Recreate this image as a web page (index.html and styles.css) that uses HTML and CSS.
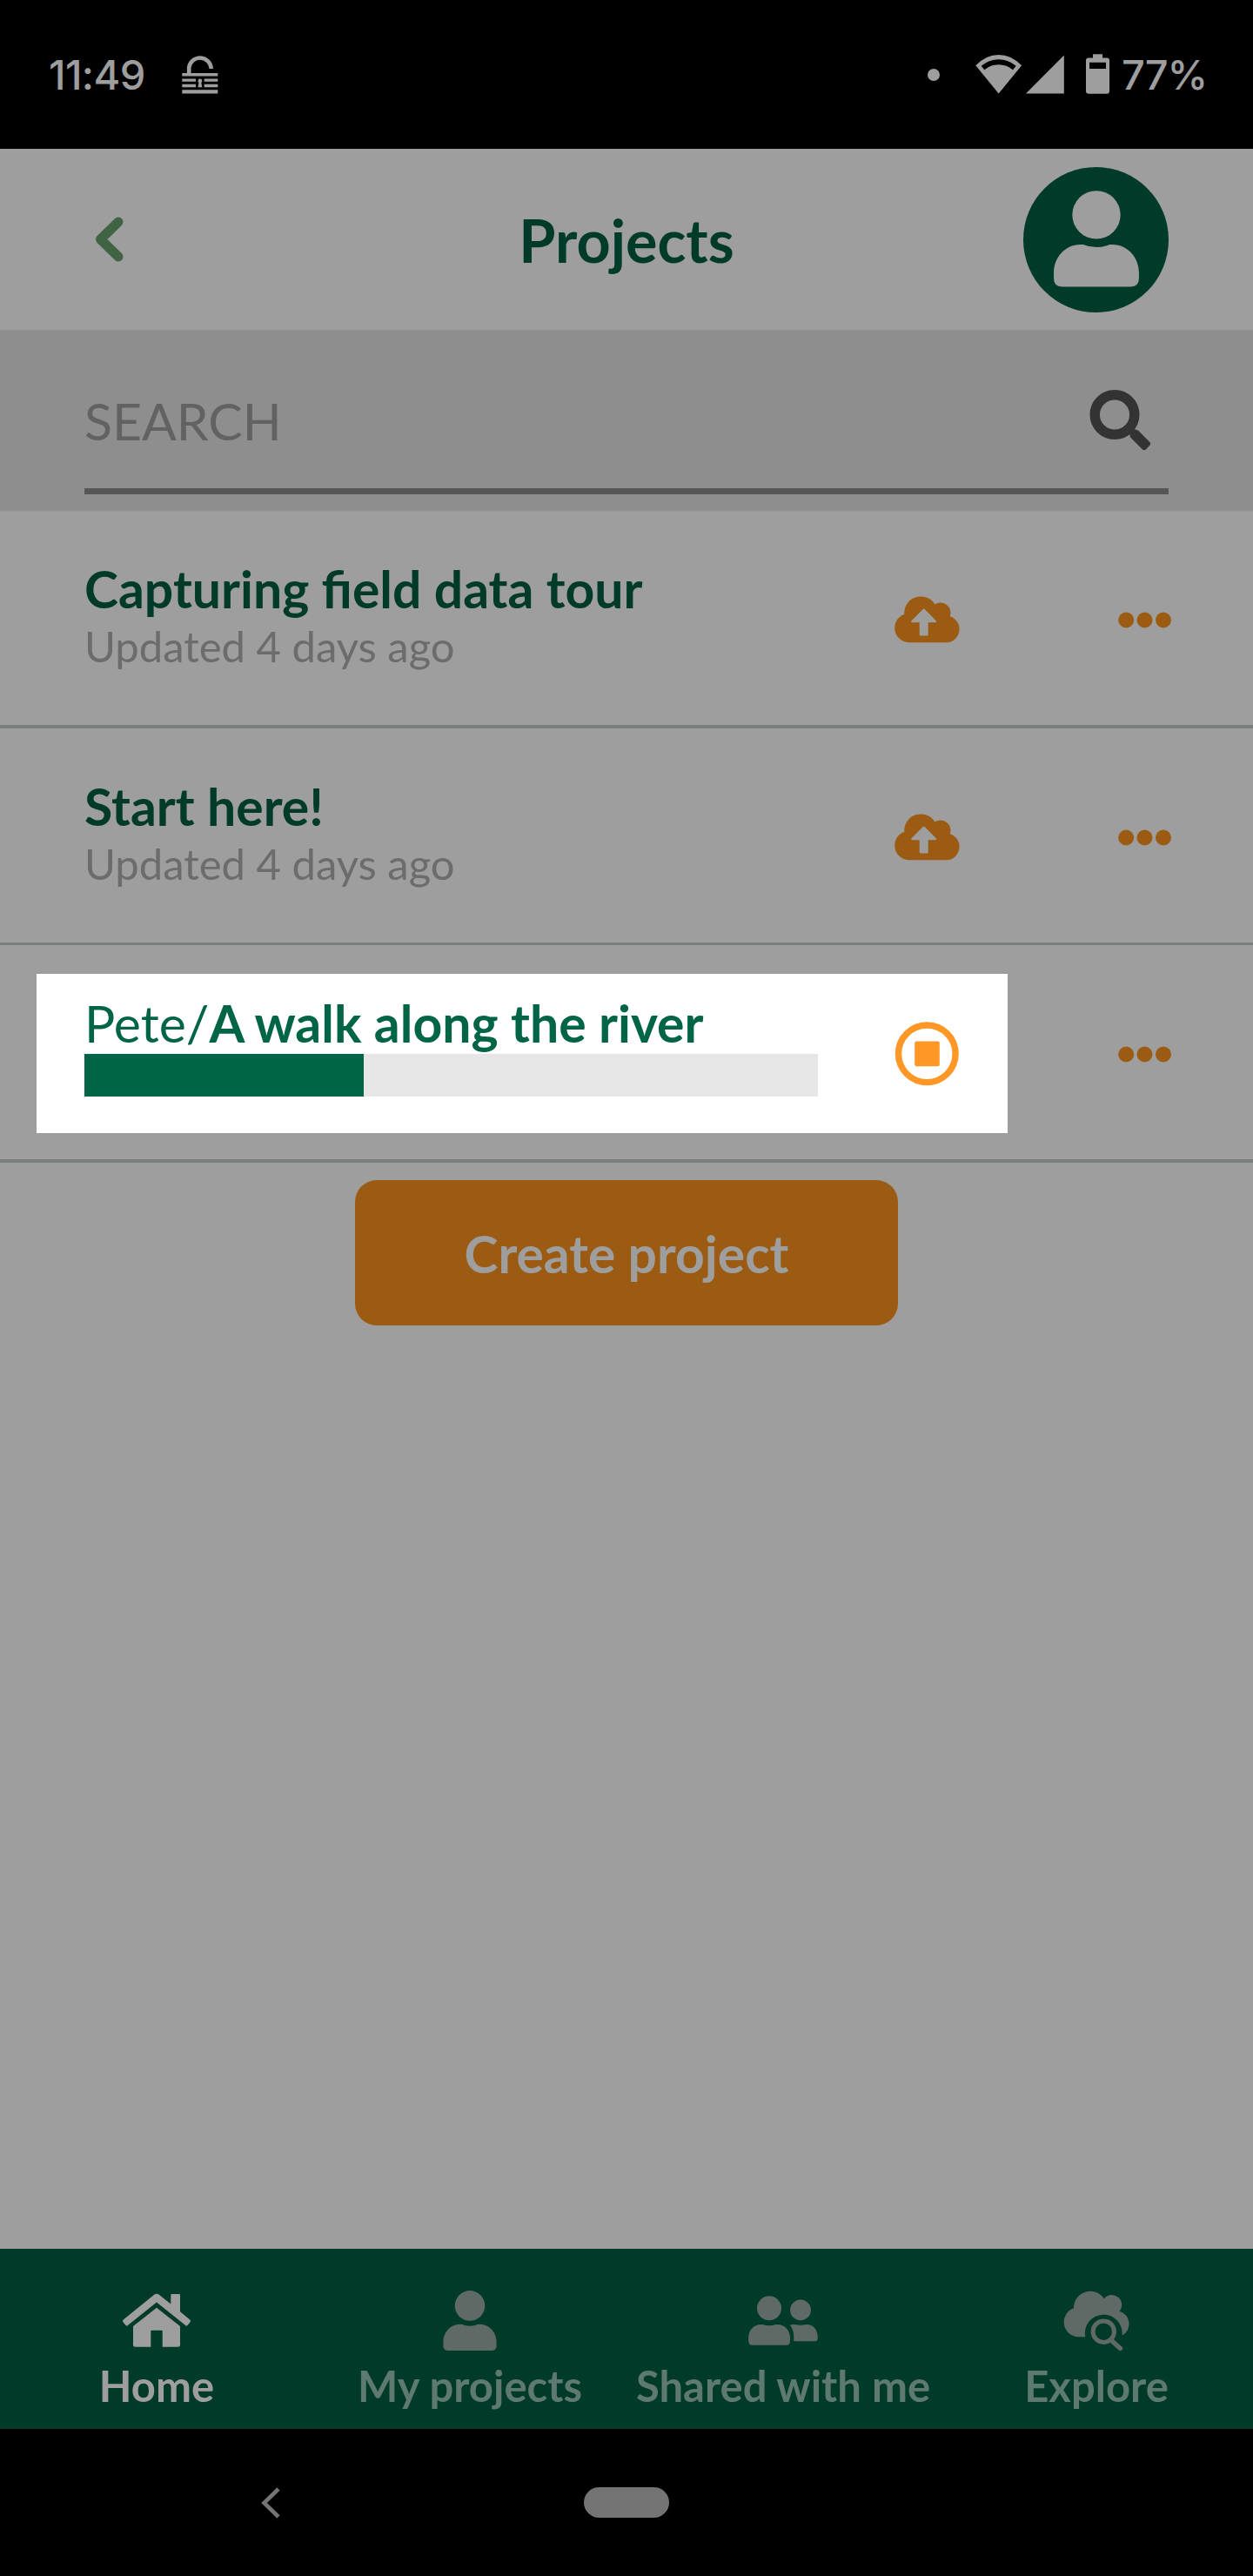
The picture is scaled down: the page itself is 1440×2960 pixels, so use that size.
FILE: index.html
```
<!DOCTYPE html>
<html lang="en">
<head>
<meta charset="utf-8">
<title>Projects</title>
<link rel="stylesheet" href="styles.css">
</head>
<body>
<svg class="defs" aria-hidden="true">
  <symbol id="person" viewBox="0 0 80 70">
    <circle cx="40" cy="17.4" r="17.3"/>
    <path d="M30.5 38.8Q40 42.6 49.5 38.8C62 37.6 70.6 48 70.6 59V63Q70.6 69 64.8 69H15.2Q9.4 69 9.4 63V59C9.4 48 18 37.6 30.5 38.8Z"/>
  </symbol>
  <symbol id="cloud-upload" viewBox="0 0 80 80">
    <path fill-rule="evenodd" d="M20 66.3A16.8 16.8 0 0 1 14.3 33.7A18.9 18.9 0 0 1 49.3 22.5A11.6 11.6 0 0 1 66.7 36.2A15.4 15.4 0 0 1 63 66.3ZM36 27.8L22.3 41.5Q21.8 43.3 23 43.3H31.7V57.3Q31.7 58.4 32.8 58.4H40.6Q41.7 58.4 41.7 57.3V43.3H50.2Q51.6 43.3 51 41.5L37.4 27.8Q36.7 27.2 36 27.8Z"/>
  </symbol>
  <symbol id="dots" viewBox="0 0 62 19">
    <circle cx="9.2" cy="9.5" r="9"/><circle cx="30.5" cy="9.5" r="9"/><circle cx="52" cy="9.5" r="9"/>
  </symbol>
</svg>

<div class="status">
  <span class="time">11:49</span>
  <svg class="lock" viewBox="0 0 42 47">
    <path d="M8.2 23V15.8A12.8 12.8 0 0 1 33.7 17" fill="none" stroke="currentColor" stroke-width="4.6"/>
    <path d="M.3 22H41.3V25.4H.3ZM.3 28.4H16V31.8H.3ZM25.7 28.4H41.3V31.8H25.7ZM.3 34.8H16V38.2H.3ZM25.7 34.8H41.3V38.2H25.7ZM.3 41.2H41.3V45.4H.3Z"/>
    <circle cx="20.9" cy="31" r="2.4"/><path d="M20 31H21.8L23.4 38.2H18.4Z"/>
  </svg>
  <div class="signals">
    <svg class="alert" viewBox="0 0 14 14"><circle cx="7" cy="7" r="7"/></svg>
    <svg class="wifi" viewBox="0 0 54 47"><path fill-rule="evenodd" d="M26.7 45.6L.3 13.3Q12 1 26.7 1T53.1 13.3ZM6.7 13.7L10.4 18.3Q17 12.3 26.7 12.3T43 18.3L46.7 13.7Q38 6.2 26.7 6.2T6.7 13.7Z"/></svg>
    <svg class="cell" viewBox="0 0 44 47"><path d="M0 45.5L43.8 1.6V45.5Z"/></svg>
    <svg class="battery" viewBox="0 0 27 47"><path fill-rule="evenodd" d="M8 .3H19V4.6H24Q27 4.6 27 7.6V42.7Q27 45.7 24 45.7H3Q0 45.7 0 42.7V7.6Q0 4.6 3 4.6H8ZM4 9.7V17H23V9.7Z"/></svg>
    <span class="percent">77%</span>
  </div>
</div>

<header class="header">
  <svg class="back" viewBox="0 0 34 52"><path d="M27 6L6.5 26L27 46" fill="none" stroke="currentColor" stroke-width="11" stroke-linecap="round" stroke-linejoin="round"/></svg>
  <h1 class="title">Projects</h1>
  <div class="avatar"><svg class="avatar-icon"><use href="#person"/></svg></div>
</header>

<div class="search">
  <div class="search-field">
    <span class="placeholder">SEARCH</span>
    <svg class="search-icon" viewBox="0 0 71 72">
      <circle cx="29" cy="29.5" r="22.8" fill="none" stroke="currentColor" stroke-width="11.4"/>
      <path d="M46.5 51.5L51.5 46.5Q54.5 46 56.5 48L69.3 61Q71 63 69.3 64.8L64.8 69.5Q63 71 61 69.5L48 56.5Q46 54 46.5 51.5Z"/>
    </svg>
  </div>
</div>

<main class="list">
  <div class="row">
    <div class="row-main">
      <div class="row-text"><div class="name">Capturing field data tour</div><div class="updated">Updated 4 days ago</div></div>
      <svg class="row-icon"><use href="#cloud-upload"/></svg>
    </div>
    <svg class="more"><use href="#dots"/></svg>
  </div>
  <div class="row row-second">
    <div class="row-main">
      <div class="row-text"><div class="name">Start here!</div><div class="updated">Updated 4 days ago</div></div>
      <svg class="row-icon"><use href="#cloud-upload"/></svg>
    </div>
    <svg class="more"><use href="#dots"/></svg>
  </div>
  <div class="row">
    <div class="row-main spotlight">
      <div class="row-text">
        <div class="name"><span class="owner">Pete/</span><span class="river">A walk along the river</span></div>
        <div class="progress"><div class="progress-fill" style="width:38.1%"></div></div>
      </div>
      <svg class="row-icon" viewBox="0 0 80 80"><circle cx="40.3" cy="39.8" r="32.8" fill="none" stroke="currentColor" stroke-width="7.4"/><rect x="26.2" y="25.4" width="28.6" height="28.8" rx="2"/></svg>
    </div>
    <svg class="more"><use href="#dots"/></svg>
  </div>
</main>

<button class="create">Create project</button>

<nav class="tabs">
  <div class="tab active">
    <svg class="tab-icon" viewBox="0 0 80 70">
      <path d="M37.5 4.5Q40 2.8 42.5 4.5L56.3 15.6V5Q56.3 4 57.3 4H66Q67 4 67 5V24.2L78.3 33.6Q79.6 35 78.6 36.3L75.4 40Q74.3 41 73.2 40L40 13.5L6.8 40Q5.7 41 4.6 40L1.4 36.3Q.4 35 1.7 33.6Z"/>
      <path d="M40 19.7L67 41V62.2Q67 64.7 64.5 64.7H46.7V46.8Q46.7 45.7 45.6 45.7H34.4Q33.3 45.7 33.3 46.8V64.7H15.5Q13 64.7 13 62.2V41Z"/>
    </svg>
    <span class="tab-label">Home</span>
  </div>
  <div class="tab">
    <svg class="tab-icon"><use href="#person"/></svg>
    <span class="tab-label">My projects</span>
  </div>
  <div class="tab">
    <svg class="tab-icon" viewBox="0 0 80 70">
      <circle cx="24" cy="20.3" r="14"/><circle cx="60" cy="22.4" r="11.9"/>
      <path d="M16.5 39Q24 41.6 31.5 39C41 38 48 45 48 54V58Q48 62.7 43.5 62.7H4.7Q.2 62.7 .2 58V54C.2 45 7 38 16.5 39Z"/>
      <path d="M47.7 39.6Q50 38.6 53.5 39Q60 40.6 66.5 39C74 38.5 79.7 44.5 79.7 53V55Q79.7 58.3 76.4 58.3H52.2V53Q52.2 45 47.7 39.6Z"/>
    </svg>
    <span class="tab-label">Shared with me</span>
  </div>
  <div class="tab">
    <svg class="tab-icon" viewBox="0 0 80 70">
      <path d="M27.3 53.3H19A17 17 0 0 1 14 20.3A18.9 18.9 0 0 1 48.7 9.3A11.5 11.5 0 0 1 66.7 23.7A15.2 15.2 0 0 1 69.5 51.7A21.4 21.4 0 1 0 27.3 53.3Z"/>
      <circle cx="48.3" cy="47.2" r="12.2" fill="none" stroke="currentColor" stroke-width="5"/>
      <path d="M57.5 57.5L67.5 66.5" stroke="currentColor" stroke-width="5.4" stroke-linecap="round"/>
    </svg>
    <span class="tab-label">Explore</span>
  </div>
</nav>

<div class="system">
  <svg class="system-back" viewBox="0 0 22 36"><path d="M20 2L3.5 18L20 34" fill="none" stroke="currentColor" stroke-width="4.6"/></svg>
  <div class="pill"></div>
</div>
</body>
</html>
```
FILE: styles.css
```
* { box-sizing: border-box; }
body {
  margin: 0;
  width: 1440px;
  height: 2960px;
  display: flex;
  flex-direction: column;
  background: #9e9e9e;
  font-family: Lato, "Liberation Sans", sans-serif;
  overflow: hidden;
}
svg { display: block; flex: none; fill: currentColor; }
.defs { width: 0; height: 0; position: absolute; }

.status {
  flex: none;
  height: 171px;
  background: #000;
  color: #9e9e9e;
  display: flex;
  align-items: center;
  padding-left: 56px;
  font: 500 47px/60px Inter, sans-serif;
}
.time { width: 153px; letter-spacing: -0.6px; }
.lock { width: 42px; height: 47px; }
.signals { display: flex; align-items: center; margin-left: auto; width: 374px; }
.alert { width: 14px; height: 14px; }
.wifi { width: 54px; height: 47px; margin-left: 41px; }
.cell { width: 44px; height: 47px; margin-left: 4px; }
.battery { width: 27px; height: 47px; margin-left: 25px; }
.percent { margin-left: 14px; letter-spacing: -1px; }

.header {
  flex: none;
  height: 208px;
  padding: 0 97px;
  display: grid;
  grid-template-columns: 1fr auto 1fr;
  align-items: center;
}
.back { width: 34px; height: 52px; margin-left: 12px; color: #406443; }
.title { margin: 0; padding-top: 2px; font-size: 68.3px; line-height: 82px; font-weight: 700; color: #003a29; }
.avatar {
  justify-self: end;
  width: 167px;
  height: 167px;
  border-radius: 50%;
  background: #003a29;
  color: #9e9e9e;
  display: flex;
  align-items: center;
  justify-content: center;
}
.avatar-icon { width: 128px; height: 112px; }

.search { flex: none; height: 208px; padding: 0 97px; background: #8e8e8e; }
.search-field {
  height: 189px;
  padding: 26px 20px 0 0;
  border-bottom: 7px solid #565656;
  display: flex;
  align-items: center;
  justify-content: space-between;
}
.placeholder { padding-top: 2px; font-size: 58.9px; line-height: 72px; color: #626262; }
.search-icon { width: 71px; height: 72px; color: #333; }

.row { height: 250px; display: flex; border-bottom: 4px solid #7b7f7c; }
.row-second { height: 249px; border-bottom-width: 3px; }
.row-main {
  width: 1116px;
  height: 183px;
  margin: 33px 0 0 42px;
  padding-left: 55px;
  display: flex;
  align-items: center;
}
.spotlight { background: #fff; }
.row-text { width: 843px; height: 143px; }
.name { padding-top: 2px; font-size: 58.9px; line-height: 70px; font-weight: 700; color: #003a29; white-space: nowrap; }
.updated { padding-top: 1px; font-size: 49px; line-height: 59px; color: #6c6c6c; }
.spotlight .name { color: #006447; }
.owner { font-weight: 400; }
.river { letter-spacing: 0.03px; }
.progress { height: 49px; background: #e6e6e6; }
.progress-fill { height: 100%; background: #006447; }
.row-icon { width: 80px; height: 80px; margin-left: 85px; color: #9c5b12; }
.spotlight .row-icon { color: #ff9727; }
.more { width: 62px; height: 19px; margin: 116px 0 0 127px; color: #9c5b12; }

.create {
  flex: none;
  width: 624px;
  height: 167px;
  margin: 20px auto 0;
  padding: 2px 0 0;
  border: 0;
  border-radius: 25px;
  background: #9c5b12;
  color: #9e9e9e;
  font: 700 58.8px/72px Lato, "Liberation Sans", sans-serif;
}

.tabs {
  flex: none;
  height: 207px;
  margin-top: auto;
  padding-top: 48px;
  background: #003a29;
  display: grid;
  grid-template-columns: repeat(4, 1fr);
}
.tab { display: flex; flex-direction: column; align-items: center; color: #5f6a66; }
.tab-icon { width: 80px; height: 70px; }
.tab-label { margin-top: 9px; font-size: 49px; line-height: 60px; font-weight: 700; color: #5e7a70; white-space: nowrap; }
.active, .active .tab-label { color: #9e9e9e; }

.system {
  flex: none;
  height: 169px;
  background: #000;
  color: #747474;
  display: flex;
  align-items: center;
  padding-left: 300px;
}
.system-back { width: 22px; height: 36px; }
.pill { width: 98px; height: 35px; margin-left: 349px; border-radius: 18px; background: #747474; }
```
